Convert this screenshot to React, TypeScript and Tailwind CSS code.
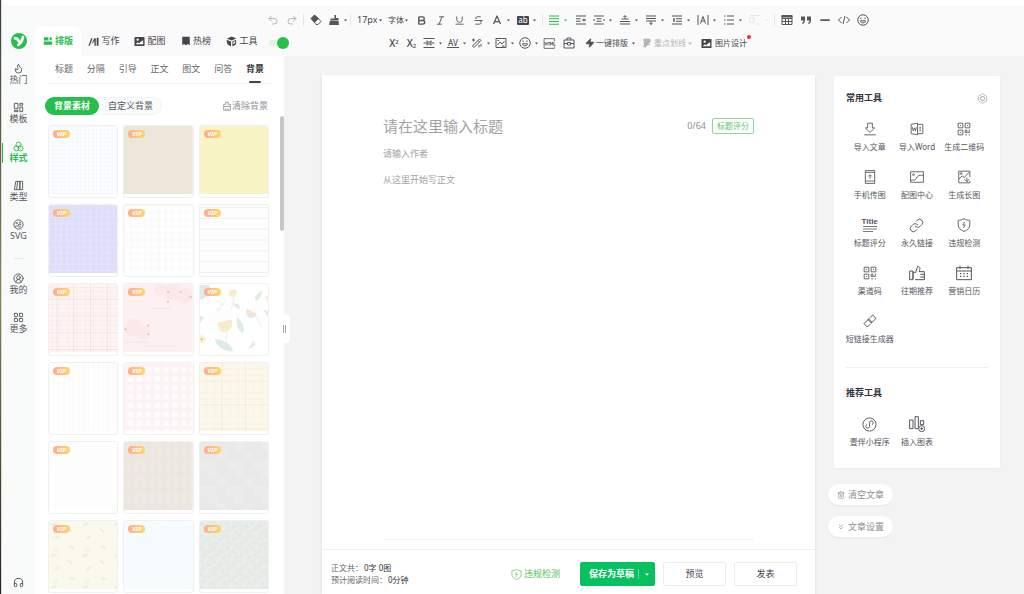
import { useState } from 'react'
import type { ReactNode } from 'react'
import clsx from 'clsx'
import {
  Bold,
  ChevronsDown,
  CircleUserRound,
  Flame,
  Headphones,
  Hexagon,
  Italic,
  LayoutGrid,
  Link,
  Minus,
  Redo2,
  Strikethrough,
  Trash2,
  Underline,
  Undo2,
  Zap,
} from 'lucide-react'

type Tool = { label: string; icon: ReactNode; caret?: boolean; color?: string }

function Svg({ children, className = 'size-3', width = 2 }: { children: ReactNode; className?: string; width?: number }) {
  return (
    <svg viewBox="0 0 24 24" fill="none" stroke="currentColor" strokeWidth={width} strokeLinejoin="round" className={clsx('shrink-0', className)} aria-hidden="true">
      {children}
    </svg>
  )
}

function Caret({ className = 'size-[3px]' }: { className?: string }) {
  return (
    <svg viewBox="0 0 10 8" className={clsx('shrink-0', className)} aria-hidden="true">
      <path d="M0 1h10L5 7z" fill="currentColor" />
    </svg>
  )
}

const TABS = [
  {
    label: '排版',
    icon: <Svg className="size-[10px]"><path d="M2 3h11v8H2zM2 13h20v8H2zM16 3h5v7h-5z" fill="currentColor" stroke="none" /></Svg>,
  },
  {
    label: '写作',
    icon: <Svg className="size-[11px]"><path d="M1 21 7 5h3L4 21zM9 14l5-9h3v16h-3V10l-4 7zM19 4h4v17h-4z" fill="currentColor" stroke="none" /></Svg>,
  },
  { label: '配图', icon: <PictureSolid className="size-[11px]" /> },
  {
    label: '热榜',
    icon: <Svg className="size-[10px]"><path d="M3 2h18v20l-4-3-5 3-5-3-4 3z" fill="currentColor" stroke="none" /></Svg>,
  },
  {
    label: '工具',
    icon: (
      <Svg className="size-[11px]">
        <path d="m12 1 10 4-9 5L2 6zM1 8l10 4v11L3 18zM14 12l8-4v10l-8 5z" fill="currentColor" stroke="none" />
        <path d="m16 13 4-2v4l-4 3z" fill="#fafafa" stroke="none" />
      </Svg>
    ),
  },
]

function PictureSolid({ className }: { className?: string }) {
  return (
    <Svg className={className}>
      <rect x="1" y="2" width="22" height="20" rx="2" fill="currentColor" stroke="none" />
      <circle cx="8" cy="8" r="2.5" fill="#fff" stroke="none" />
      <path d="M4 18c3-5 5-5 8-2 3-4 5-5 8-6v8z" fill="#fff" stroke="none" />
    </Svg>
  )
}

const RAIL_TOP = [
  { label: '热门', icon: <Flame className="size-[11px]" strokeWidth={2} /> },
  {
    label: '模板',
    icon: <Svg className="size-[11px]"><path d="M3 3h8v11H3zM3 18h8v3H3zM15 3h6v4h-6zM15 11h6v10h-6z" /></Svg>,
  },
  {
    label: '样式',
    icon: <Svg className="size-[11px]"><circle cx="12" cy="8" r="5.5" /><circle cx="7.5" cy="16" r="5.5" /><circle cx="16.5" cy="16" r="5.5" /></Svg>,
  },
  {
    label: '类型',
    icon: <Svg className="size-[11px]"><path d="M6 3 3 21h5l2-18zM10 3h5v18H8M15 3h6v18h-6z" /></Svg>,
  },
  {
    label: 'SVG',
    icon: (
      <Svg className="size-[11px]">
        <circle cx="12" cy="12" r="10" />
        <circle cx="8" cy="9" r="1.5" />
        <circle cx="15" cy="8" r="1.5" />
        <path d="M4 18c4-6 9 1 8-6 2 1 4 1 6 0M12 17h5" />
      </Svg>
    ),
  },
]

const RAIL_BOTTOM = [
  { label: '我的', icon: <CircleUserRound className="size-[11px]" /> },
  { label: '更多', icon: <LayoutGrid className="size-[11px]" /> },
]

const SUB_TABS = ['标题', '分隔', '引导', '正文', '图文', '问答', '背景']

const HISTORY_TOOLS: Tool[] = [
  { label: '撤销', icon: <Undo2 className="size-3" strokeWidth={2} />, color: 'text-[#b5b5b5]' },
  { label: '重做', icon: <Redo2 className="size-3" strokeWidth={2} />, color: 'text-[#b5b5b5]' },
]

const CLEAR_TOOLS: Tool[] = [
  {
    label: '清除格式',
    icon: <Svg><path d="m2 9 7-7 8 7-8 8z" fill="currentColor" /><path d="m9 17 8-8 5 6-6 6h-4z" /></Svg>,
  },
  {
    label: '格式刷',
    icon: <Svg><path d="M13 2h3v6h5v4H5V9h8zM4 13h17l1 9H2z" fill="currentColor" stroke="none" /></Svg>,
    caret: true,
  },
]

const TEXT_TOOLS: Tool[] = [
  { label: '加粗', icon: <Bold className="size-[11px]" strokeWidth={3} /> },
  { label: '斜体', icon: <Italic className="size-[11px]" strokeWidth={2} /> },
  { label: '下划线', icon: <Underline className="size-[11px]" strokeWidth={2} /> },
  { label: '删除线', icon: <Strikethrough className="size-[11px]" strokeWidth={2} /> },
  { label: '文字颜色', icon: <Svg><path d="m5 20 7-16 7 16M8 15h8" strokeWidth="2.5" /></Svg>, caret: true },
  {
    label: '背景色',
    icon: <span className="flex h-[9px] w-3 items-center justify-center rounded-[1px] bg-[#45454d] text-[8px] leading-none text-white">ab</span>,
    caret: true,
  },
]

const PARAGRAPH_TOOLS: Tool[] = [
  { label: '对齐', icon: <Svg><path d="M2 4h20M2 9.500h20M2 15h20M2 20.500h20" /></Svg>, caret: true, color: 'text-[#26bf4b]' },
  { label: '首行缩进', icon: <Svg><path d="M2 4h20M2 9.500h9M2 14.500h9M2 20h20M14 12h8M18 9v6" /></Svg> },
  { label: '两端缩进', icon: <Svg><path d="M2 4h20M7 9.500h10M7 14.500h10M2 20h20M2 10v4M22 10v4" /></Svg>, caret: true },
  { label: '段前距', icon: <Svg><path d="M5 10h14M2 15h20M2 20h20M12 9V4M9 6l3-3 3 3" /></Svg>, caret: true },
  { label: '段后距', icon: <Svg><path d="M2 4h20M2 9h20M2 14h20M12 14v7M9 18l3 3 3-3" /></Svg>, caret: true },
  { label: '行间距', icon: <Svg><path d="M2 4h20M10 9.500h12M10 14.500h12M2 20h20M6 9v6M4 10h4M4 14h4" /></Svg>, caret: true },
  { label: '字间距', icon: <Svg><path d="M2 2v20M22 2v20M7 19l5-14 5 14M9 14h6" /></Svg>, caret: true },
  { label: '列表', icon: <Svg><path d="M2 4h3M2 12h3M2 20h3M8 4h14M8 12h14M8 20h14" /></Svg>, caret: true },
  { label: '浮动', icon: <Svg><path d="M2 7h8v10H2zM2 3h20M13 20h9" /></Svg>, caret: true, color: 'text-[#e6e6e6]' },
]

const INSERT_TOOLS: Tool[] = [
  {
    label: '表格',
    icon: <Svg><path d="M2 3h20v18H2zM2 9h20M2 15h20M9 9v12M15 9v12" /><path d="M2 3h20v3H2z" fill="currentColor" /></Svg>,
  },
  {
    label: '引用',
    icon: <Svg><path d="M2 5h8v8c0 4-2 6-5 7l-1-2c2-1 3-3 3-5H2zM14 5h8v8c0 4-2 6-5 7l-1-2c2-1 3-3 3-5h-5z" fill="currentColor" stroke="none" /></Svg>,
  },
  { label: '分割线', icon: <Minus className="size-[14px]" strokeWidth={3} /> },
  { label: '源代码', icon: <Svg><path d="m7 6-6 6 6 6M17 6l6 6-6 6M14 4l-4 16" /></Svg> },
  { label: '表情', icon: <Face /> },
]

function Face() {
  return (
    <Svg>
      <circle cx="12" cy="12" r="10.500" />
      <path d="M7 13.500h10c0 5.500-10 5.500-10 0z" />
      <path d="M8 7v3M16 7v3" />
    </Svg>
  )
}

const MORE_TOOLS: Tool[] = [
  { label: '字符间距', icon: <Svg><path d="M1 3h22M1 21h22M8 7v10M16 7v10M1 12h5M18 12h5M8 10h8M8 14h8" /></Svg>, caret: true },
  {
    label: '字距',
    icon: (
      <span className="flex w-3 flex-col items-center border-b border-current text-[8px] leading-[8px] font-medium">AV</span>
    ),
    caret: true,
  },
  {
    label: '魔法棒',
    icon: <Svg><path d="M3 18 17 4l3 3L6 21zM14 7l3 3M5 3v6M2 6h6M16 16v5M20 14v5" /></Svg>,
    caret: true,
  },
  { label: '图片', icon: <Svg><path d="M2 3h20v18H2zM5 16l5-6 4 4 5-6M5 7h3M14 18h5" /></Svg>, caret: true },
  { label: '符号', icon: <Face />, caret: true },
]

const COMMON_TOOLS = [
  { label: '导入文章', icon: <Svg className="size-[14px]" width={1.5}><path d="M8 2h8v8h4l-8 8-8-8h4zM2 22h20" /></Svg> },
  {
    label: '导入Word',
    icon: <Svg className="size-[14px]" width={1.5}><path d="m2 4 11-2v20L2 20zM13 4h9v16h-9M16 9h3M16 12h3M16 15h3M4 9l1.500 6L7.500 10l2 5L11 9" /></Svg>,
  },
  { label: '生成二维码', icon: <QrIcon /> },
  { label: '手机传图', icon: <Svg className="size-[14px]" width={1.5}><path d="M4 1h16v22H4zM4 4h16M4 19h16M12 15V9M9 11l3-3 3 3" /></Svg> },
  {
    label: '配图中心',
    icon: <Svg className="size-[14px]" width={1.5}><path d="M1 3h22v18H1zM1 18c5-2 8 1 10-4s5-5 12-5" /><circle cx="6" cy="8" r="1.5" /></Svg>,
  },
  {
    label: '生成长图',
    icon: <Svg className="size-[14px]" width={1.5}><path d="M22 12V2H3v20h19v-3M3 16l6-6 3 3 9-9M17 13v7M13 16l4 4 4-4" /><circle cx="7" cy="6" r="1.5" /></Svg>,
  },
  {
    label: '标题评分',
    icon: (
      <span className="flex h-[14px] flex-col items-center">
        <span className="font-['Liberation_Sans',sans-serif] text-[8px] leading-[8px] font-bold">Title</span>
        <svg viewBox="0 0 16 6" className="h-[6px] w-4" stroke="currentColor" aria-hidden="true"><path d="M1 .5h14M1 3h14M1 5.500h10" strokeWidth=".8" /></svg>
      </span>
    ),
  },
  { label: '永久链接', icon: <Link className="size-[15px]" strokeWidth={1.5} /> },
  { label: '违规检测', icon: <ShieldBolt className="size-[14px]" /> },
  { label: '渠道码', icon: <QrIcon /> },
  {
    label: '往期推荐',
    icon: <Svg className="size-4" width={1.5}><path d="M1 9h5v13H1zM6 21V11h4l3-9c4 0 4 4 2 8h8v12H9M17 14h6M17 18h6" /></Svg>,
  },
  {
    label: '营销日历',
    icon: <Svg className="size-4" width={1.5}><path d="M1 4h22v18H1zM1 9h22M6 1v5M18 1v5" /><path d="M6 13h2M11 13h2M16 13h2M6 17h2M11 17h2M16 17h2" strokeWidth="2" /></Svg>,
  },
  {
    label: '短链接生成器',
    icon: <Svg className="size-4" width={1.5}><path d="m12 7 4-4 5 5-7 7-5-5 2-2M12 17l-4 4-5-5 7-7 5 5-2 2" /></Svg>,
  },
]

const RECOMMENDED_TOOLS = [
  {
    label: '壹伴小程序',
    icon: <Svg className="size-[15px]" width={1.5}><circle cx="12" cy="12" r="10.500" /><path d="M12 15a3 3 0 1 1-4-3M12 15V9a3 3 0 1 1 4 3" /></Svg>,
  },
  {
    label: '插入图表',
    icon: <Svg className="size-4" width={1.5}><path d="M1 6h5v13H1zM9 1h5v18H9zM17 7h5v6h-5z" /><circle cx="19" cy="19" r="4.500" fill="#fff" /><path d="M19 17v4M17 19h4" /></Svg>,
  },
]

function QrIcon() {
  return (
    <Svg className="size-[14px]" width={1.5}>
      <path d="M2 2h8v8H2zM14 2h8v8h-8zM2 14h8v8H2zM14 14h3v4h-3zM21 13v5h-3M14 22h3M21 21v2M5 6h2M17 6h2M5 18h2" />
    </Svg>
  )
}

function ShieldBolt({ className }: { className?: string }) {
  return (
    <Svg className={className} width={1.5}>
      <path d="M12 1c3 2 6 3 10 3v8c0 5-4 9-10 11C6 21 2 17 2 12V4c4 0 7-1 10-3z" />
      <path d="m13 7-3 5h4l-3 5" />
    </Svg>
  )
}

function ToolButton({ tool, tight }: { tool: Tool; tight?: boolean }) {
  return (
    <button
      type="button"
      aria-label={tool.label}
      className={clsx(
        'flex h-5 shrink-0 items-center',
        tool.color ?? 'text-[#55555c]',
        tool.caret ? 'gap-1 pl-[3px]' : 'w-[19px] justify-center',
        tool.caret && (tight ? 'w-6' : 'w-[26px]'),
      )}
    >
      {tool.icon}
      {tool.caret && <Caret />}
    </button>
  )
}

function Separator() {
  return <span className="mx-[2px] h-3 w-px shrink-0 bg-[#e6e6e6]" />
}

function Toolbar() {
  const [fontSize, setFontSize] = useState('17px')
  const [font, setFont] = useState('字体')
  const [helper, setHelper] = useState(true)

  return (
    <div className="flex min-w-0 flex-1 flex-col gap-[3px] pt-[5px] text-[#45454d]">
      <div className="flex h-5 items-center">
        {HISTORY_TOOLS.map((t) => <ToolButton key={t.label} tool={t} />)}
        <Separator />
        <div className="flex w-[42px] shrink-0">
          {CLEAR_TOOLS.map((t) => <ToolButton key={t.label} tool={t} />)}
        </div>
        <Separator />
        <label className="flex w-[35px] shrink-0 items-center justify-between pr-[6px] pl-1">
          <select aria-label="字号" value={fontSize} onChange={(e) => setFontSize(e.target.value)} className="w-5 appearance-none bg-transparent text-[9px] leading-3 outline-none">
            <option>17px</option>
          </select>
          <Caret />
        </label>
        <label className="flex w-6 shrink-0 items-center justify-between pr-1">
          <select aria-label="字体" value={font} onChange={(e) => setFont(e.target.value)} className="w-[18px] appearance-none bg-transparent text-[8px] leading-3 outline-none">
            <option>字体</option>
          </select>
          <Caret />
        </label>
        {TEXT_TOOLS.map((t) => <ToolButton key={t.label} tool={t} />)}
        <Separator />
        {PARAGRAPH_TOOLS.map((t) => <ToolButton key={t.label} tool={t} />)}
        <Separator />
        {INSERT_TOOLS.map((t) => <ToolButton key={t.label} tool={t} />)}
      </div>

      <div className="flex h-5 items-center text-[8px] whitespace-nowrap">
        <input
          type="checkbox"
          role="switch"
          aria-label="助手开关"
          checked={helper}
          onChange={(e) => setHelper(e.target.checked)}
          className="mr-[96px] ml-[6px] flex h-[6px] w-5 shrink-0 appearance-none items-center rounded-full bg-[#e3f1e6] before:size-3 before:shrink-0 before:rounded-full before:bg-[#bbb] checked:justify-end checked:before:bg-[#26bf4b]"
        />
        <button type="button" className="w-[18px] shrink-0 text-[10px] font-medium">X<sup className="text-[6px]">2</sup></button>
        <button type="button" className="w-[17px] shrink-0 text-[10px] font-medium">X<sub className="text-[6px]">2</sub></button>
        {MORE_TOOLS.map((t) => <ToolButton key={t.label} tool={t} tight />)}
        <button type="button" aria-label="HTML" className="flex w-[19px] shrink-0 justify-center text-[#55555c]">
          <Svg className="size-[13px]" width={1.5}><path d="M21 8V3H2v18h19v-3M4 9.500v6M7.500 9.500v6M4 12.500h3.500M9 10h4M11 10v5.500M14 15.500v-6l2 4 2-4v6M20 9.500v6h3" /></Svg>
        </button>
        <button type="button" aria-label="工具箱" className="flex w-[19px] shrink-0 justify-center text-[#55555c]">
          <Svg className="size-3"><path d="M2 6h20v16H2zM8 6V2h8v4M2 13h7M15 13h7M9 11h6v5H9z" /></Svg>
        </button>
        <button type="button" className="ml-[7px] flex shrink-0 items-center gap-px">
          <Zap className="size-[10px]" fill="currentColor" />
          一键排版
          <Caret className="ml-[3px] size-[3px]" />
        </button>
        <button type="button" className="ml-[7px] flex shrink-0 items-center gap-[2px] text-[#b5b5b5]">
          <Svg className="size-[10px]"><path d="M3 2h16l3 6-6 5 5 3-7 1-5 5H3l2-7z" fill="currentColor" stroke="none" /></Svg>
          重点划线
          <Caret className="h-[3px] w-1" />
        </button>
        <button type="button" className="relative ml-[9px] flex shrink-0 items-center gap-[3px]">
          <PictureSolid className="size-[11px]" />
          图片设计
          <span className="absolute -top-[2px] -right-1 size-1 rounded-full bg-[#fa2a2a]" />
        </button>
      </div>
    </div>
  )
}

function Header() {
  const [active, setActive] = useState('排版')
  return (
    <header className="flex h-[51px] shrink-0 bg-[#fafafa]">
      <div className="flex w-[33px] shrink-0 justify-center bg-[#f9fbfa] pt-7">
        <svg viewBox="0 0 24 24" className="size-4" aria-label="壹伴">
          <circle cx="12" cy="12" r="12" fill="#26bf4b" />
          <path d="M6 8c3 0 5 2 6 5" fill="none" stroke="#fff" strokeWidth="4" strokeLinecap="round" />
          <path d="M18 6c-1 6-3 9-7 12" fill="none" stroke="#fff" strokeWidth="4" strokeLinecap="round" />
        </svg>
      </div>
      <nav className="flex w-[228px] shrink-0 items-end">
        {TABS.map((tab) => (
          <button
            key={tab.label}
            type="button"
            onClick={() => setActive(tab.label)}
            className={clsx(
              'flex h-[30px] w-[46px] shrink-0 items-center justify-center gap-[2px] rounded-t-md text-[9px]',
              tab.label === active ? 'bg-white font-bold text-[#26bf4b]' : 'text-[#45454d]',
            )}
          >
            {tab.icon}
            {tab.label}
          </button>
        ))}
      </nav>
      <Toolbar />
    </header>
  )
}

function RailItem({ label, icon, active, onClick }: { label: string; icon: ReactNode; active: boolean; onClick: () => void }) {
  return (
    <button
      type="button"
      onClick={onClick}
      className={clsx(
        'relative flex h-[39px] w-full flex-col items-center pt-[7px] text-[9px] leading-3',
        active ? 'font-bold text-[#26bf4b]' : 'text-[#55555c]',
      )}
    >
      {active && <span className="absolute top-[9px] left-0 h-5 w-px bg-[#26bf4b]" />}
      {icon}
      {label}
    </button>
  )
}

function Rail() {
  const [active, setActive] = useState('样式')
  return (
    <aside className="flex w-[33px] shrink-0 flex-col items-center bg-[#f9fbfa]">
      {RAIL_TOP.map((item) => (
        <RailItem key={item.label} {...item} active={item.label === active} onClick={() => setActive(item.label)} />
      ))}
      <hr className="my-[7px] w-[10px] border-[#e8eae9]" />
      {RAIL_BOTTOM.map((item) => (
        <RailItem key={item.label} {...item} active={item.label === active} onClick={() => setActive(item.label)} />
      ))}
      <button type="button" aria-label="客服" className="mt-auto mb-[6px] text-[#45454d]">
        <Headphones className="size-[11px]" />
      </button>
    </aside>
  )
}

// tile size and strokes for the repeating papers
type Paper = { id: string; base: string; tile?: number; lines?: ReactNode; art?: ReactNode }

const PAPERS: Paper[] = [
  { id: 'fine-grid', base: '#fcfefe', tile: 4, lines: <path d="M0 .5h4M.5 0v4" stroke="#f4f9fa" /> },
  { id: 'beige', base: '#ede6da' },
  { id: 'yellow', base: '#f9f4c5' },
  { id: 'violet', base: '#dfdefa', tile: 6, lines: <path d="M0 .5h6M.5 0v6" stroke="#e5e4fc" /> },
  { id: 'grid', base: '#fefefe', tile: 7, lines: <path d="M0 .5h7M.5 0v7" stroke="#f8f8f8" /> },
  { id: 'ruled', base: '#fdfdfd', tile: 11, lines: <path d="M0 2.500h11" stroke="#efefef" /> },
  {
    id: 'pink-plaid',
    base: '#fdf5f4',
    tile: 17,
    lines: <><path d="M0 3.500h17M0 7.500h17M0 12.500h17M3.500 0v17M11.500 0v17" stroke="#faeceb" /><path d="M8.500 0v17M0 15.500h17" stroke="#f4e1e0" /></>,
  },
  {
    id: 'blossom',
    base: '#fdf0f1',
    art: (
      <>
        <g fill="#fbe3e5" opacity=".6"><circle cx="50" cy="8" r="9" /><circle cx="62" cy="12" r="8" /><circle cx="37" cy="6" r="6" /><circle cx="10" cy="44" r="9" /><circle cx="20" cy="49" r="7" /></g>
        <g fill="#e3b4b8"><circle cx="45" cy="8" r="1" /><circle cx="58" cy="8" r="1" /><circle cx="68" cy="13" r="1" /><circle cx="45" cy="18" r="1" /><circle cx="2" cy="46" r="1" /><circle cx="25" cy="42" r="1" /><circle cx="25" cy="51" r="1" /></g>
        <path d="M0 59h25M22 63h30M28 25h20" stroke="#f9e3e4" />
      </>
    ),
  },
  {
    id: 'leaves',
    base: '#fefefe',
    art: (
      <>
        <g fill="#dfebe5"><path d="M0 1h10c1 9-4 14-10 15zM15 56c9 0 16 4 19 12-9 1-16-4-19-12zM38 34c6 4 8 10 6 16-5-3-8-9-6-16zM64 26l6 2v6zM0 32l4 2-4 6zM56 13l7-7c0 6-2 10-6 11zM34 19l6 2 1 4c-4 0-6-2-7-6z" /></g>
        <path d="M18 39l15-3c1 8-3 13-8 13-4 0-6-4-7-10zM66 13l4-1v7zM30 7c6-3 9-1 8 3l-4 4-4-2z" fill="#f9ebcd" />
        <path d="M47 25l11 5c-3 7-12 6-11-5zM49 66l6-9 1 6z" fill="#f1e5dc" />
        <circle cx="2" cy="56" r="4" fill="#faf0d3" />
        <circle cx="2" cy="56" r="1" fill="#c9b893" />
        <path d="M16 30l9-12M17 25l5 1M20 20l5 1M35 14l-3 12M28 49l-2 8M56 31l7 12" stroke="#e4e9e5" strokeWidth=".7" />
      </>
    ),
  },
  { id: 'pinstripe', base: '#fefefe', tile: 5, lines: <path d="M.5 0v5" stroke="#f9f9f9" /> },
  { id: 'gingham', base: '#fffdfd', tile: 9, lines: <path d="M0 2.500h9M2.500 0v9" stroke="#fbeaee" strokeOpacity=".5" strokeWidth="4" /> },
  {
    id: 'cream',
    base: '#fcf7eb',
    tile: 24,
    lines: <><path d="M0 6.500h24M0 12.500h24M6.500 0v24M15.500 0v24" stroke="#faf3e3" /><path d="M22.500 0v24M0 18.500h24" stroke="#f4ebda" /></>,
  },
  { id: 'dots', base: '#fefefe', tile: 4, lines: <path d="M1 1h1v1H1z" fill="#f3f3f3" /> },
  { id: 'linen', base: '#eee8e2', tile: 16, lines: <path d="M1.500 0v16M7.500 0v16M9.500 0v16M0 15.500h16" stroke="#eae4dd" /> },
  { id: 'stone', base: '#e9e9e9', tile: 27, lines: <path d="M9 0h9v9H9zM18 9h9v9h-9zM0 18h9v9H0zM9 18h8v8H9z" fill="#ececec" /> },
  {
    id: 'notes',
    base: '#f9f9ed',
    tile: 32,
    lines: <g fill="none" stroke="#ebebdf" strokeWidth="2"><path d="m6 18 5-3M21 26l5 1M20 8l4 3M3 4l5-2" /><circle cx="7" cy="29" r="2" strokeWidth="1" /></g>,
  },
  { id: 'sky', base: '#f6fbfe', tile: 29, lines: <path d="M5 5h10v8H5zM18 16h8v9h-8z" fill="#f4fafd" /> },
  {
    id: 'felt',
    base: '#e8ece8',
    tile: 13,
    lines: <><path d="M0 1h4v2H0zM7 4h3v3H7zM2 8h4v2H2zM10 10h3v2h-3z" fill="#e3e8e4" /><path d="M4 0h3v3H4zM9 7h3v2H9zM0 5h2v3H0zM6 10h2v3H6z" fill="#edefea" /></>,
  },
]

function PaperCard({ paper }: { paper: Paper }) {
  return (
    <button type="button" aria-label={paper.id} className="relative h-[73px] overflow-hidden rounded-[3px] border border-[#f0f0f0] bg-white pb-[3px]">
      <svg className="block h-full w-full" viewBox="0 0 70 69" preserveAspectRatio="xMidYMin slice" aria-hidden="true">
        {paper.tile && (
          <defs>
            <pattern id={paper.id} width={paper.tile} height={paper.tile} patternUnits="userSpaceOnUse">{paper.lines}</pattern>
          </defs>
        )}
        <rect width="70" height="69" fill={paper.base} />
        {paper.tile && <rect width="70" height="69" fill={`url(#${paper.id})`} />}
        {paper.art}
      </svg>
      <span className="absolute top-1 left-1 flex h-2 w-[17px] items-center justify-center rounded-full bg-linear-to-r from-[#ffab8c] to-[#ffd66b] text-[6px] leading-none font-bold text-white italic">
        VIP
      </span>
    </button>
  )
}

function StylePanel() {
  const [subTab, setSubTab] = useState('背景')
  const [source, setSource] = useState('背景素材')
  return (
    <section className="relative flex w-[249px] shrink-0 flex-col bg-white">
      <div className="mx-3 flex h-7 justify-between border-b border-[#f0f0f0] px-2 text-[9px]">
        {SUB_TABS.map((t) => (
          <button
            key={t}
            type="button"
            onClick={() => setSubTab(t)}
            className={clsx('flex flex-col items-center justify-between pt-[7px] leading-3', t === subTab ? 'font-bold text-[#33333a]' : 'text-[#66666c]')}
          >
            {t}
            {t === subTab && <span className="h-[2px] w-3 rounded-full bg-[#45454d]" />}
          </button>
        ))}
      </div>

      <div className="mt-[13px] flex items-center justify-between pr-4 pl-[10px]">
        <div className="flex h-[18px] rounded-full bg-[#f9fbfa] text-[9px] text-[#55555c] ring-1 ring-[#f3f5f4] ring-inset">
          {['背景素材', '自定义背景'].map((s) => (
            <button
              key={s}
              type="button"
              onClick={() => setSource(s)}
              className={clsx('rounded-full px-[9px]', s === source && 'bg-[#26bf4b] font-bold text-white')}
            >
              {s}
            </button>
          ))}
        </div>
        <button type="button" className="flex items-center text-[9px] text-[#909096]">
          <Svg className="size-[10px]"><path d="M9 8V3h6v5h5v5H4V8zM4 13v9h16v-9M9 22v-4M15 22v-4" /></Svg>
          清除背景
        </button>
      </div>

      <div className="mt-[10px] min-h-0 flex-1 overflow-hidden pr-[15px] pl-[13px]">
        <div className="grid grid-cols-3 gap-x-[5px] gap-y-[6px]">
          {PAPERS.map((p) => <PaperCard key={p.id} paper={p} />)}
        </div>
      </div>

      <span className="absolute top-[60px] right-0 h-[115px] w-1 rounded-full bg-[#c6c6c6]" />
      <button type="button" aria-label="收起面板" className="absolute top-[258px] -right-[6px] flex h-[29px] w-[11px] items-center justify-center gap-px rounded-r bg-white">
        <span className="h-2 w-px bg-[#a8a8ac]" />
        <span className="h-2 w-px bg-[#a8a8ac]" />
      </button>
    </section>
  )
}

function Editor() {
  const [title, setTitle] = useState('')
  return (
    <article className="flex min-w-0 flex-1 flex-col bg-white shadow-sm">
      <div className="flex flex-1 flex-col px-[61px] pt-[41px] pb-[9px]">
        <div className="flex h-5 items-center">
          <input
            aria-label="标题"
            value={title}
            maxLength={64}
            onChange={(e) => setTitle(e.target.value)}
            placeholder="请在这里输入标题"
            className="min-w-0 flex-1 text-[15px] leading-5 outline-none placeholder:text-[#a3a3a3]"
          />
          <span className="mr-[6px] text-[9px] text-[#8e8e8e]">{title.length}/64</span>
          <button type="button" className="h-4 rounded-[2px] border border-[#8fd69b] px-1 text-[8px] leading-none text-[#62c573]">标题评分</button>
        </div>
        <input aria-label="作者" placeholder="请输入作者" className="mt-[10px] h-[14px] text-[9px] outline-none placeholder:text-[#a3a3a3]" />
        <textarea aria-label="正文" placeholder="从这里开始写正文" className="mt-[13px] flex-1 resize-none border-b border-[#f0f0f0] text-[9px] leading-[14px] outline-none placeholder:text-[#a3a3a3]" />
      </div>

      <footer className="flex h-[45px] shrink-0 items-center gap-2 border-t border-[#f0f0f0] pt-1 pr-[18px] pl-[9px] text-[9px]">
        <dl className="mr-auto text-[8px] leading-3 text-[#66666c]">
          <div className="flex gap-px"><dt>正文共：</dt><dd className="text-[#33333a]">0字 0图</dd></div>
          <div className="flex gap-px"><dt>预计阅读时间：</dt><dd className="text-[#33333a]">0分钟</dd></div>
        </dl>
        <button type="button" className="mr-3 flex items-center gap-[2px] text-[#56bf62]">
          <ShieldBolt className="size-[11px]" />
          违规检测
        </button>
        <div className="flex h-6 items-center rounded-[2px] bg-[#07c160] font-bold text-white">
          <button type="button" className="pr-1 pl-[9px]">保存为草稿</button>
          <button type="button" aria-label="更多保存选项" className="flex h-[10px] items-center border-l border-[#5fd797] px-[6px]">
            <Caret className="h-[3px] w-1" />
          </button>
        </div>
        <button type="button" className="h-6 w-[63px] rounded-[2px] border border-[#ededed] text-[#45454d]">预览</button>
        <button type="button" className="h-6 w-[63px] rounded-[2px] border border-[#ededed] text-[#45454d]">发表</button>
      </footer>
    </article>
  )
}

function ToolGrid({ tools }: { tools: { label: string; icon: ReactNode }[] }) {
  return (
    <div className="mt-[18px] grid grid-cols-3">
      {tools.map((t) => (
        <button key={t.label} type="button" className="flex h-12 flex-col items-center gap-[5px] text-[8px] leading-3 whitespace-nowrap text-[#55555c]">
          <span className="flex h-[14px] items-center">{t.icon}</span>
          {t.label}
        </button>
      ))}
    </div>
  )
}

function ToolPanel() {
  return (
    <aside className="flex w-[172px] shrink-0 flex-col items-start gap-[11px] pt-px">
      <div className="mb-[5px] ml-[6px] w-[166px] rounded-[2px] bg-white px-3 pt-4 pb-[3px] shadow-xs">
        <div className="flex h-3 items-center justify-between">
          <h2 className="text-[9px] font-bold text-[#33333a]">常用工具</h2>
          <button type="button" aria-label="设置" className="relative text-[#a0a0a6]">
            <Hexagon className="size-[11px]" strokeWidth={1.5} />
            <span className="absolute inset-[3px] rounded-full border border-current" />
          </button>
        </div>
        <ToolGrid tools={COMMON_TOOLS} />
        <hr className="mt-[5px] mb-[19px] border-[#ededed]" />
        <h2 className="h-3 text-[9px] leading-3 font-bold text-[#33333a]">推荐工具</h2>
        <ToolGrid tools={RECOMMENDED_TOOLS} />
      </div>
      <button type="button" className="flex h-[21px] w-[65px] items-center justify-center gap-[3px] rounded-full bg-white text-[9px] text-[#909096] shadow-xs">
        <Trash2 className="size-2" />
        清空文章
      </button>
      <button type="button" className="flex h-[21px] w-[65px] items-center justify-center gap-[3px] rounded-full bg-white text-[9px] text-[#909096] shadow-xs">
        <ChevronsDown className="size-2" />
        文章设置
      </button>
    </aside>
  )
}

export default function App() {
  return (
    <div className="flex h-screen overflow-hidden bg-white font-['Noto_Sans','Noto_Sans_CJK_SC',sans-serif]">
      <div className="w-[2px] shrink-0 border-r border-[#d9d9d6] bg-linear-to-b from-[#3d3f3d] via-[#8b8452] to-[#2a211f]" />
      <div className="flex min-w-0 flex-1 flex-col pt-[5px]">
        <Header />
        <div className="flex min-h-0 flex-1 bg-[#f3f3f3]">
          <Rail />
          <StylePanel />
          <main className="flex min-w-0 flex-1 gap-[13px] pt-[19px] pr-6 pl-[38px]">
            <Editor />
            <ToolPanel />
          </main>
        </div>
      </div>
    </div>
  )
}
